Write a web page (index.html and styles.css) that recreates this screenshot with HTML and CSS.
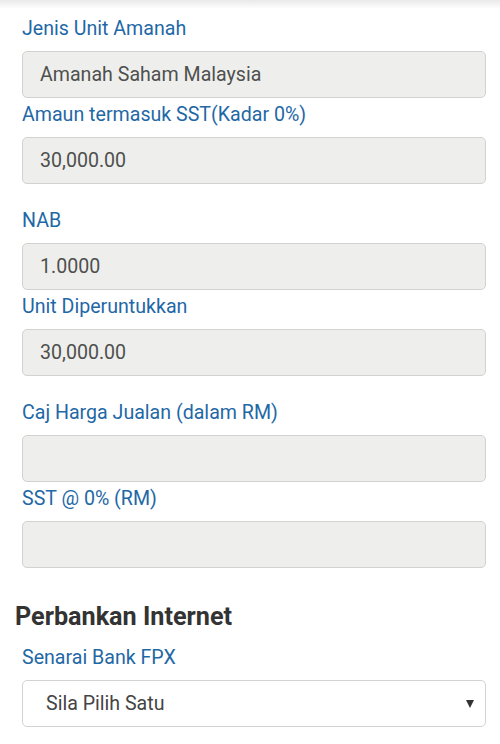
FILE: index.html
```html
<!DOCTYPE html>
<html lang="ms">
<head>
<meta charset="utf-8">
<title>Pembelian Unit</title>
<link rel="stylesheet" href="styles.css">
</head>
<body>
<div class="topshade"></div>
<main class="form">
  <div class="pair">
    <div class="field">
      <label class="lbl">Jenis Unit Amanah</label>
      <div class="box">Amanah Saham Malaysia</div>
    </div>
    <div class="field">
      <label class="lbl">Amaun termasuk SST(Kadar 0%)</label>
      <div class="box">30,000.00</div>
    </div>
  </div>
  <div class="pair">
    <div class="field">
      <label class="lbl">NAB</label>
      <div class="box">1.0000</div>
    </div>
    <div class="field">
      <label class="lbl">Unit Diperuntukkan</label>
      <div class="box">30,000.00</div>
    </div>
  </div>
  <div class="pair">
    <div class="field">
      <label class="lbl">Caj Harga Jualan (dalam RM)</label>
      <div class="box"></div>
    </div>
    <div class="field">
      <label class="lbl">SST @ 0% (RM)</label>
      <div class="box"></div>
    </div>
  </div>
  <h2 class="heading">Perbankan Internet</h2>
  <div class="field">
    <label class="lbl">Senarai Bank FPX</label>
    <div class="select"><span>Sila Pilih Satu</span><span class="arrow"></span></div>
  </div>
</main>
</body>
</html>
```
FILE: styles.css
```css
html, body {
  margin: 0;
  padding: 0;
  background: #ffffff;
}
body {
  font-family: Roboto, "Liberation Sans", sans-serif;
  width: 500px;
  height: 744px;
  overflow: hidden;
  position: relative;
}
.topshade {
  position: absolute;
  top: 0;
  left: 0;
  right: 0;
  height: 9px;
  background: linear-gradient(to bottom, #e9e9e9, rgba(255,255,255,0));
}
.form {
  padding: 17px 14px 0 22px;
}
.pair {
  margin-bottom: 25px;
}
.field {
  display: flex;
  flex-direction: column;
  margin-bottom: 5px;
}
.lbl {
  font-size: 19.6px;
  line-height: 24px;
  color: #1f68a6;
  margin-bottom: 10px;
}
.box {
  box-sizing: border-box;
  height: 47px;
  background: #eeefec;
  border: 1px solid #d2d3d0;
  border-radius: 5px;
  padding: 0 17px;
  display: flex;
  align-items: center;
  font-size: 19.6px;
  color: #4f4f4f;
}
.heading {
  margin: 34px 0 14px -7px;
  font-size: 25.2px;
  line-height: 30px;
  font-weight: 700;
  color: #333333;
}
.select {
  box-sizing: border-box;
  height: 47px;
  background: #ffffff;
  border: 1px solid #d3d3d3;
  border-radius: 5px;
  padding: 0 11px 0 23px;
  display: flex;
  align-items: center;
  justify-content: space-between;
  font-size: 19.6px;
  color: #444444;
}
.arrow {
  width: 0;
  height: 0;
  border-left: 4.5px solid transparent;
  border-right: 4.5px solid transparent;
  border-top: 8px solid #333333;
}
```
